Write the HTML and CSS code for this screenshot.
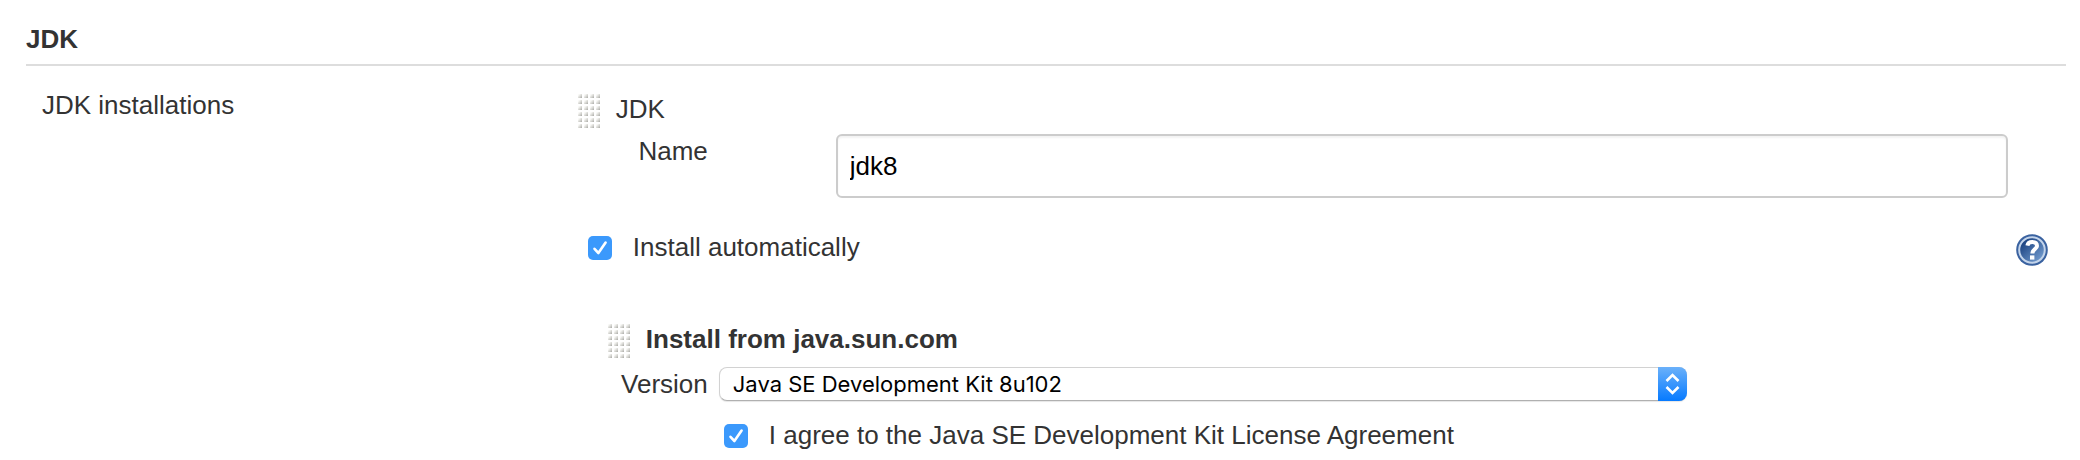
FILE: index.html
```html
<!DOCTYPE html>
<html lang="en">
<head>
<meta charset="utf-8">
<title>JDK</title>
<link rel="stylesheet" href="styles.css">
</head>
<body>
<svg class="defs" width="0" height="0" aria-hidden="true">
  <defs>
    <linearGradient id="dot" x1="0" y1="0" x2="1" y2="1">
      <stop offset="0.2" stop-color="#fafaf8"/><stop offset="0.6" stop-color="#d4d4d0"/><stop offset="1" stop-color="#a8a8a4"/>
    </linearGradient>
    <pattern id="grip" width="6" height="6" patternUnits="userSpaceOnUse">
      <rect x="1" y="1" width="4" height="4" fill="url(#dot)"/>
    </pattern>
  </defs>
</svg>
<form class="config">
  <h1 class="section-title">JDK</h1>
  <div class="setting">
    <div class="setting-label">JDK installations</div>
    <div class="setting-body">
      <div class="drag-row">
        <svg class="handle" viewBox="0 0 24 36" aria-hidden="true"><rect width="24" height="36" fill="url(#grip)"/></svg>
        <span>JDK</span>
      </div>
      <div class="name-row">
        <label class="field-label" for="name">Name</label>
        <input class="text-input" id="name" type="text" value="jdk8">
      </div>
      <div class="auto-row">
        <label class="check-label"><input class="check" type="checkbox" checked>Install automatically</label>
        <button class="help" type="button" aria-label="Help">
          <svg viewBox="0 0 32 32" aria-hidden="true">
            <defs><linearGradient id="ball" x1="0" y1="0" x2="1" y2="1"><stop offset="0.2" stop-color="#1f4785"/><stop offset="1" stop-color="#82abdc"/></linearGradient></defs>
            <circle cx="16" cy="16" r="15.8" fill="#3a62a0"/>
            <circle cx="16" cy="16" r="12.8" fill="url(#ball)" stroke="#c3d4ea" stroke-width="2"/>
            <path d="M11.4 11.6C11.8 9 13.6 8 16.2 8C19.2 8 21 9.5 21 12C21 15.2 16.4 15 16.4 19.6" fill="none" stroke="#fff" stroke-width="4"/>
            <rect x="14" y="21.4" width="4.4" height="4.2" fill="#fff"/>
          </svg>
        </button>
      </div>
      <div class="installer">
        <div class="drag-row installer-title">
          <svg class="handle" viewBox="0 0 24 36" aria-hidden="true"><rect width="24" height="36" fill="url(#grip)"/></svg>
          <span>Install from java.sun.com</span>
        </div>
      </div>
      <div class="version-row">
        <label class="field-label" for="version">Version</label>
        <div class="select-wrap">
          <select class="select" id="version"><option>Java SE Development Kit 8u102</option></select>
          <svg class="select-arrows" viewBox="0 0 29 34" aria-hidden="true"><path d="M8.5 14L14.5 8L20.5 14M8.5 20L14.5 26L20.5 20" fill="none" stroke="#fff" stroke-width="2.6"/></svg>
        </div>
      </div>
      <div class="agree-row">
        <label class="check-label"><input class="check" type="checkbox" checked>I agree to the Java SE Development Kit License Agreement</label>
      </div>
    </div>
  </div>
</form>
</body>
</html>
```
FILE: styles.css
```css
* { box-sizing: border-box; }
body {
  margin: 0;
  background: #fff;
  color: #333;
  font: 26px/30px "Liberation Sans", Arial, sans-serif;
}
.defs { position: absolute; }
.config { padding: 24px 14px 10px 26px; }
.section-title {
  margin: 0;
  padding-bottom: 10px;
  border-bottom: 2px solid #ddd;
  font-size: 26px;
  line-height: 30px;
}
.setting {
  display: grid;
  grid-template-columns: 27% 1fr;
  padding-top: 24px;
}
.setting-label { padding-left: 16px; }
.setting-body { padding-top: 3px; }
.drag-row {
  display: flex;
  gap: 15px;
  height: 41px;
  line-height: 32px;
}
.handle { flex: none; width: 24px; height: 36px; }
.name-row {
  display: flex;
  align-items: flex-start;
  padding-right: 58px;
}
.field-label {
  flex: none;
  width: 131px;
  padding-top: 2px;
  text-align: right;
}
.name-row .field-label { margin-right: 128px; }
.text-input {
  flex: 1;
  min-width: 0;
  height: 64px;
  padding: 0 12px;
  border: 2px solid #ccc;
  border-radius: 6px;
  background: #fff;
  box-shadow: inset 0 2px 2px rgba(0, 0, 0, 0.05);
  color: #000;
  font: inherit;
}
.auto-row {
  display: flex;
  justify-content: space-between;
  padding: 34px 18px 0 11px;
}
.check-label {
  display: flex;
  align-items: flex-start;
  gap: 19px;
}
.check {
  appearance: none;
  flex: none;
  width: 24px;
  height: 24px;
  margin: 4px 2px 0 0;
  border-radius: 5px;
  background: #3b99fc url("data:image/svg+xml,%3Csvg xmlns='http://www.w3.org/2000/svg' viewBox='0 0 24 24'%3E%3Cpath d='M6.5 12.8L10.4 17L17.6 6.5' fill='none' stroke='%23fff' stroke-width='2.6' stroke-linecap='round' stroke-linejoin='round'/%3E%3C/svg%3E");
}
.help {
  width: 32px;
  height: 32px;
  margin-top: 2px;
  padding: 0;
  border: 0;
  background: none;
}
.help svg { display: block; }
.installer { padding: 57px 0 0 30px; }
.installer-title { height: 44px; font-weight: bold; }
.version-row {
  display: flex;
  align-items: flex-start;
  gap: 11px;
}
.select-wrap { position: relative; width: 65%; }
.select {
  appearance: none;
  display: block;
  width: 100%;
  height: 34px;
  padding: 0 40px 0 13px;
  border: 1px solid #d2d2d2;
  border-bottom-color: #b0b0b0;
  border-radius: 8px;
  background: #fff;
  box-shadow: 0 1px 1px rgba(0, 0, 0, 0.1);
  color: #000;
  font: 22px/30px Inter, "Liberation Sans", sans-serif;
}
.select-arrows {
  position: absolute;
  top: 0;
  right: 0;
  width: 29px;
  height: 34px;
  border-radius: 0 8px 8px 0;
  background: linear-gradient(#6bb1fa, #067aff);
  pointer-events: none;
}
.agree-row { padding: 19px 0 0 147px; }
```
